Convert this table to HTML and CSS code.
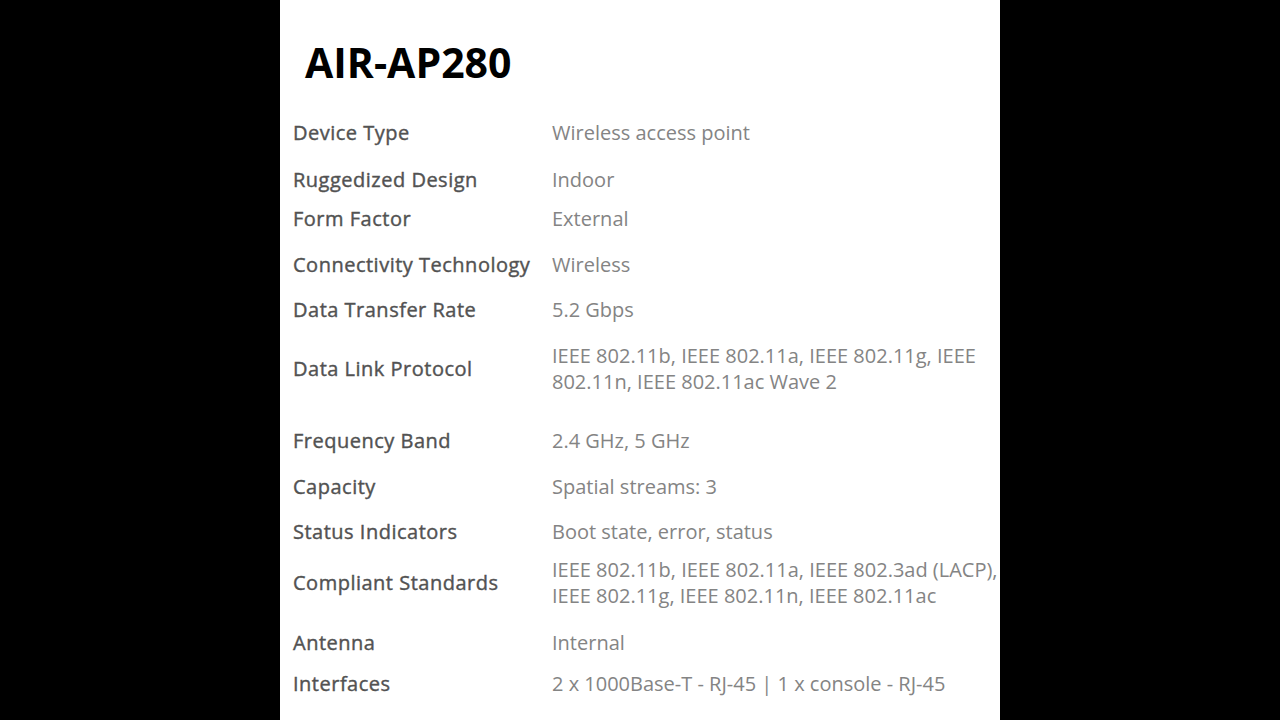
FILE: index.html
```html
<!DOCTYPE html>
<html lang="en">
<head>
<meta charset="utf-8">
<title>AIR-AP280</title>
<link rel="stylesheet" href="styles.css">
</head>
<body>
<main class="sheet">
  <h1 class="title">AIR-AP280</h1>
  <div class="specs">
    <div class="row"><div class="label">Device Type</div><div class="value">Wireless access point</div></div>
    <div class="row gap-wide"><div class="label">Ruggedized Design</div><div class="value">Indoor</div></div>
    <div class="row gap-sm"><div class="label">Form Factor</div><div class="value">External</div></div>
    <div class="row"><div class="label">Connectivity Technology</div><div class="value">Wireless</div></div>
    <div class="row gap-snug"><div class="label">Data Transfer Rate</div><div class="value">5.2 Gbps</div></div>
    <div class="row"><div class="label">Data Link Protocol</div><div class="value">IEEE 802.11b, IEEE 802.11a, IEEE 802.11g, IEEE<br>802.11n, IEEE 802.11ac Wave 2</div></div>
    <div class="row gap-lg"><div class="label">Frequency Band</div><div class="value">2.4 GHz, 5 GHz</div></div>
    <div class="row"><div class="label">Capacity</div><div class="value">Spatial streams: 3</div></div>
    <div class="row gap-snug"><div class="label">Status Indicators</div><div class="value">Boot state, error, status</div></div>
    <div class="row gap-xs"><div class="label">Compliant Standards</div><div class="value">IEEE 802.11b, IEEE 802.11a, IEEE 802.3ad (LACP),<br>IEEE 802.11g, IEEE 802.11n, IEEE 802.11ac</div></div>
    <div class="row gap-wide"><div class="label">Antenna</div><div class="value">Internal</div></div>
    <div class="row gap-md"><div class="label">Interfaces</div><div class="value">2 x 1000Base-T - RJ-45 | 1 x console - RJ-45</div></div>
  </div>
</main>
</body>
</html>
```

FILE: styles.css
```css
html, body {
  margin: 0;
  padding: 0;
  background: #000;
  height: 100%;
}

body {
  display: flex;
  justify-content: center;
  overflow: hidden;
}

.sheet {
  width: 720px;
  height: 720px;
  background: #fff;
  box-sizing: border-box;
  padding-top: 42px;
  font-family: "Open Sans", "Liberation Sans", sans-serif;
}

.title {
  margin: 0 0 0 25px;
  font-size: 41px;
  line-height: 40px;
  font-weight: 700;
  color: #000;
}

.specs {
  margin-top: 38px;
  padding-left: 13px;
  display: flex;
  flex-direction: column;
}

.row {
  display: grid;
  grid-template-columns: 259px 1fr;
  align-items: center;
  margin-top: 20px;
  font-size: 20px;
  line-height: 26px;
}

.row:first-child { margin-top: 0; }
.row.gap-wide { margin-top: 20.5px; }
.row.gap-snug { margin-top: 19.5px; }
.row.gap-md { margin-top: 15.5px; }
.row.gap-sm { margin-top: 13px; }
.row.gap-xs { margin-top: 12px; }
.row.gap-lg { margin-top: 32.5px; }

.label {
  font-weight: 400;
  letter-spacing: 0.5px;
  color: #525252;
  -webkit-text-stroke: 0.4px #525252;
  white-space: nowrap;
}

.value {
  font-weight: 400;
  color: #848484;
  white-space: nowrap;
}
```
